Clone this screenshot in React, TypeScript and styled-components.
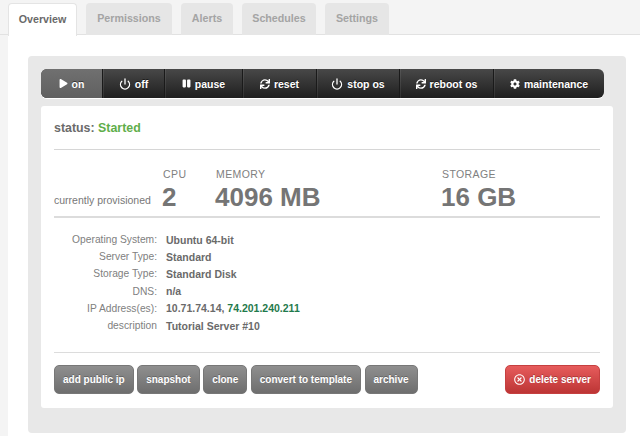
import React from 'react'
import styled, { createGlobalStyle } from 'styled-components'
import { FaPlay, FaPause, FaSync, FaCog, FaRegTimesCircle } from 'react-icons/fa'
import { Power } from 'lucide-react'

const Global = createGlobalStyle`
  html, body {
    margin: 0;
    padding: 0;
    background: #f4f4f4;
    overflow: hidden;
  }
  * {
    box-sizing: border-box;
  }
`

const Page = styled.div`
  width: 640px;
  height: 436px;
  overflow: hidden;
  font-family: 'Liberation Sans', Arial, sans-serif;
  color: #666;
`

const TabBar = styled.div`
  display: flex;
  gap: 9px;
  height: 35px;
  padding: 3px 0 0 8px;
  border-bottom: 1px solid #e2e2e2;
`

const Tab = styled.div<{ $active?: boolean; $width: number }>`
  width: ${p => p.$width}px;
  height: ${p => (p.$active ? '33px' : '32px')};
  display: flex;
  align-items: center;
  justify-content: center;
  padding-bottom: ${p => (p.$active ? '3px' : '2px')};
  font-size: 10.7px;
  font-weight: bold;
  color: ${p => (p.$active ? '#6a6a6a' : '#a4a4a4')};
  background: ${p => (p.$active ? '#fff' : '#e6e6e6')};
  border-radius: 4px 4px 0 0;
  position: relative;
  ${p => p.$active && 'border: 1px solid #e4e4e4; border-bottom: 0; z-index: 1;'}
`

const Content = styled.div`
  background: #fff;
  margin-left: 8px;
  height: 401px;
  padding: 21px 14px 0 20px;
`

const Panel = styled.div`
  background: #e8e8e8;
  border-radius: 4px;
  height: 377px;
  padding: 13px 13px 0 13px;
`

const Toolbar = styled.div`
  display: flex;
  width: 563px;
  height: 29px;
  border-radius: 6px;
  overflow: hidden;
  background: linear-gradient(#484848, #1f1f1f);
  box-shadow: 0 1px 0 #fff;
`

const ToolButton = styled.div<{ $width: number; $active?: boolean }>`
  width: ${p => p.$width}px;
  display: flex;
  align-items: center;
  justify-content: center;
  gap: 4px;
  color: #fff;
  font-size: 10.5px;
  font-weight: bold;
  text-shadow: 0 -1px 0 rgba(0, 0, 0, 0.5);
  border-left: 1px solid #1a1a1a;
  box-shadow: inset 1px 0 0 rgba(255, 255, 255, 0.08);
  background: ${p => (p.$active ? 'linear-gradient(#707070, #606060)' : 'transparent')};
  &:first-child {
    border-left: 0;
    box-shadow: none;
  }
  svg {
    flex: none;
  }
`

const Card = styled.div`
  margin-top: 8px;
  width: 572px;
  height: 302px;
  background: #fff;
  border-radius: 3px;
  padding: 0 13px;
`

const Status = styled.div`
  height: 44px;
  padding-top: 15px;
  font-size: 12.4px;
  line-height: 14px;
  font-weight: bold;
  border-bottom: 1px solid #d6d6d6;
  color: #6b6b6b;
  span {
    color: #5fae4a;
  }
`

const Specs = styled.div`
  display: flex;
  align-items: flex-end;
  height: 68px;
  padding-bottom: 5px;
  border-bottom: 2px solid #dcdcdc;
`

const Provisioned = styled.div`
  width: 108px;
  font-size: 10.5px;
  line-height: 12px;
  padding-bottom: 5px;
  color: #777;
`

const Spec = styled.div<{ $width: number }>`
  width: ${p => p.$width}px;
`

const SpecLabel = styled.div`
  font-size: 10.5px;
  line-height: 12px;
  letter-spacing: 0.4px;
  color: #808080;
  padding-left: 1px;
`

const SpecValue = styled.div`
  font-size: 26px;
  line-height: 28px;
  margin-top: 3px;
  font-weight: bold;
  color: #757575;
`

const Details = styled.div`
  display: grid;
  grid-template-columns: 103px 1fr;
  column-gap: 9px;
  grid-auto-rows: 17.2px;
  align-items: center;
  padding-top: 13px;
  height: 135px;
  border-bottom: 1px solid #dcdcdc;
`

const Label = styled.div`
  text-align: right;
  color: #808080;
  font-size: 10.25px;
`

const Value = styled.div`
  font-weight: bold;
  font-size: 10.5px;
  color: #6a6a6a;
  span {
    color: #1f7a4c;
  }
`

const Actions = styled.div`
  display: flex;
  gap: 3.5px;
  padding-top: 12px;
`

const Action = styled.div<{ $danger?: boolean }>`
  height: 29px;
  padding: 0 8px;
  display: flex;
  align-items: center;
  gap: 4px;
  font-size: 10px;
  font-weight: bold;
  color: #fff;
  border-radius: 5px;
  text-shadow: 0 -1px 0 rgba(0, 0, 0, 0.25);
  background: ${p =>
    p.$danger ? 'linear-gradient(#e65c5c, #bd3535)' : 'linear-gradient(#8f8f8f, #6e6e6e)'};
  border: 1px solid ${p => (p.$danger ? '#c54040' : '#777')};
  ${p => p.$danger && 'margin-left: auto;'}
`

const tabs = [
  { label: 'Overview', width: 69, active: true },
  { label: 'Permissions', width: 86 },
  { label: 'Alerts', width: 52 },
  { label: 'Schedules', width: 74 },
  { label: 'Settings', width: 64 },
]

const tools = [
  { label: 'on', width: 61, icon: <FaPlay size={9} />, active: true },
  { label: 'off', width: 62, icon: <Power size={12} strokeWidth={2.6} /> },
  { label: 'pause', width: 78, icon: <FaPause size={9} /> },
  { label: 'reset', width: 74, icon: <FaSync size={10} /> },
  { label: 'stop os', width: 83, icon: <Power size={12} strokeWidth={2.6} /> },
  { label: 'reboot os', width: 94, icon: <FaSync size={10} /> },
  { label: 'maintenance', width: 111, icon: <FaCog size={10} /> },
]

const specs = [
  { label: 'CPU', value: '2', width: 53 },
  { label: 'MEMORY', value: '4096 MB', width: 226 },
  { label: 'STORAGE', value: '16 GB', width: 100 },
]

const rows: [string, React.ReactNode][] = [
  ['Operating System:', 'Ubuntu 64-bit'],
  ['Server Type:', 'Standard'],
  ['Storage Type:', 'Standard Disk'],
  ['DNS:', 'n/a'],
  ['IP Address(es):', <>10.71.74.14, <span>74.201.240.211</span></>],
  ['description', 'Tutorial Server #10'],
]

export default function App() {
  return (
    <Page>
      <Global />
      <TabBar>
        {tabs.map(t => (
          <Tab key={t.label} $width={t.width} $active={t.active}>
            {t.label}
          </Tab>
        ))}
      </TabBar>
      <Content>
        <Panel>
          <Toolbar>
            {tools.map(t => (
              <ToolButton key={t.label} $width={t.width} $active={t.active}>
                {t.icon}
                {t.label}
              </ToolButton>
            ))}
          </Toolbar>
          <Card>
            <Status>
              status: <span>Started</span>
            </Status>
            <Specs>
              <Provisioned>currently provisioned</Provisioned>
              {specs.map(s => (
                <Spec key={s.label} $width={s.width}>
                  <SpecLabel>{s.label}</SpecLabel>
                  <SpecValue>{s.value}</SpecValue>
                </Spec>
              ))}
            </Specs>
            <Details>
              {rows.map(([label, value]) => (
                <React.Fragment key={label}>
                  <Label>{label}</Label>
                  <Value>{value}</Value>
                </React.Fragment>
              ))}
            </Details>
            <Actions>
              <Action>add public ip</Action>
              <Action>snapshot</Action>
              <Action>clone</Action>
              <Action>convert to template</Action>
              <Action>archive</Action>
              <Action $danger>
                <FaRegTimesCircle size={11} />
                delete server
              </Action>
            </Actions>
          </Card>
        </Panel>
      </Content>
    </Page>
  )
}
